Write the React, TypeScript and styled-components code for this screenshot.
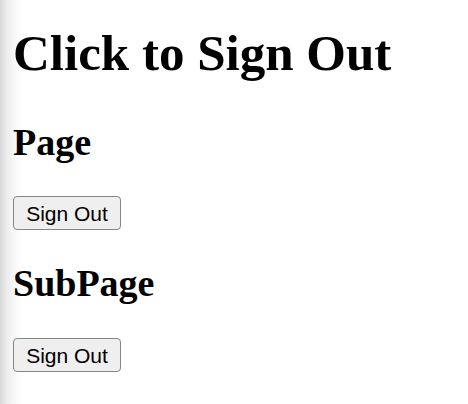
import React from "react";
import styled, { createGlobalStyle } from "styled-components";

const Global = createGlobalStyle`
  html {
    background: linear-gradient(to right, #d8d8d8 0px, #ececec 7px, #f8f8f8 14px, #ffffff 22px);
    min-height: 100%;
  }
  body {
    margin: 0;
    padding: 0 13px;
    font-family: "Liberation Serif", "Times New Roman", serif;
    color: #000;
  }
`;

const Page = styled.div`
  display: flex;
  flex-direction: column;
  align-items: flex-start;
`;

const Title = styled.h1`
  font-size: 51px;
  font-weight: bold;
  line-height: 1.15;
  margin: 24px 0 6px;
`;

const Heading = styled.h2`
  font-size: 38px;
  font-weight: bold;
  line-height: 1.15;
  margin: 32px 0 32px;
`;

const Button = styled.button`
  font-family: "Liberation Sans", Arial, sans-serif;
  font-size: 21px;
  line-height: 1;
  color: #000;
  background: #efefef;
  border: 1px solid #858585;
  border-radius: 4px;
  padding: 0;
  height: 34px;
  width: 108px;
`;

export default function App() {
  return (
    <Page>
      <Global />
      <Title>Click to Sign Out</Title>
      <Heading>Page</Heading>
      <Button>Sign Out</Button>
      <Heading>SubPage</Heading>
      <Button>Sign Out</Button>
    </Page>
  );
}
